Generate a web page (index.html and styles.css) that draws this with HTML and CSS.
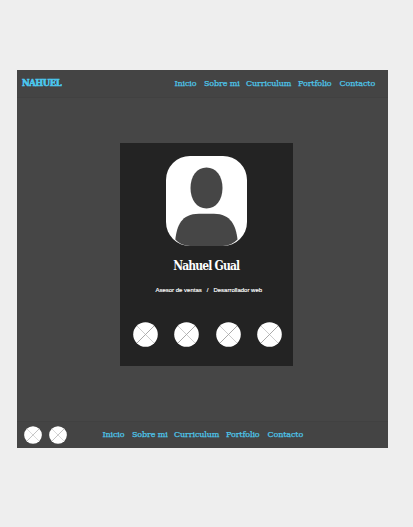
FILE: index.html
```html
<!DOCTYPE html>
<html lang="es">
<head>
<meta charset="utf-8">
<title>Nahuel Gual</title>
<link rel="stylesheet" href="styles.css">
</head>
<body>
<svg class="defs" aria-hidden="true">
  <symbol id="social" viewBox="0 0 25 25">
    <circle cx="12.5" cy="12.5" r="12.3" fill="#fff"/>
    <path d="M4 4 21 21" stroke="#ccc" stroke-width="1"/>
    <path d="M4 21 21 4" stroke="#aaa" stroke-width="1"/>
  </symbol>
</svg>
<div class="page">
  <header class="header">
    <span class="logo">NAHUEL</span>
    <nav class="nav"><a>Inicio</a><a>Sobre mi</a><a>Curriculum</a><a>Portfolio</a><a>Contacto</a></nav>
  </header>
  <main class="main">
    <section class="card">
      <svg class="photo" viewBox="0 0 81 90">
        <rect width="81" height="90" rx="24" fill="#fff"/>
        <path d="M40.500 11.500C50 11.500 56.500 20 56.500 32S50 52.500 40.500 52.500 24.500 44 24.500 32 31 11.500 40.500 11.500Z" fill="#464646"/>
        <path d="M9.300 83.500C11 70 15 57.700 33 57.700H48C65 57.700 70 70 71.500 83.500Q65 90 57 90H24Q15 90 9.300 83.500Z" fill="#464646"/>
      </svg>
      <h1 class="name">Nahuel Gual</h1>
      <p class="role"><span>Asesor de ventas</span><span>/</span><span>Desarrollador web</span></p>
      <div class="socials">
        <svg><use href="#social"/></svg><svg><use href="#social"/></svg><svg><use href="#social"/></svg><svg><use href="#social"/></svg>
      </div>
    </section>
  </main>
  <footer class="footer">
    <div class="links"><svg><use href="#social"/></svg><svg><use href="#social"/></svg></div>
    <nav class="nav"><a>Inicio</a><a>Sobre mi</a><a>Curriculum</a><a>Portfolio</a><a>Contacto</a></nav>
  </footer>
</div>
</body>
</html>
```
FILE: styles.css
```css
* { box-sizing: border-box; }
body { display: flow-root; margin: 0; height: 527px; overflow: hidden; background: #eee; }
.defs { display: none; }
.page {
  width: 370.500px; height: 378px; margin: 70px 0 0 17px;
  display: flow-root; background: #464646; color: #fff;
}
.header {
  height: 28px; padding: 0 0 0 5px;
  display: flex; align-items: center;
  background: #444; border-bottom: 1px solid #414141;
}
.logo {
  width: 152.500px; padding-bottom: 2px; color: #4bc8ef; white-space: nowrap;
  font: bold 8.400px/12px "DejaVu Serif", serif;
  -webkit-text-stroke: 0.6px #4bc8ef;
  letter-spacing: -0.4px;
}
.nav {
  display: grid; grid-template-columns: 29.500px 42px 52px 41.500px 37px;
  color: #4ec6ea; white-space: nowrap;
  font: 8px/12px "DejaVu Serif", serif;
  letter-spacing: -0.12px;
  -webkit-text-stroke: 0.25px #4ec6ea;
}
.main { height: 323px; padding: 45px 0 0 103px; }
.card {
  width: 172.500px; height: 223px; padding-top: 13px;
  display: flex; flex-direction: column; align-items: center;
  background: #232323;
}
.photo { width: 81px; height: 90px; display: block; }
.name {
  margin: 11px 0 0; white-space: nowrap;
  font: bold 12px/18px "DejaVu Serif Condensed", "DejaVu Serif", serif;
  letter-spacing: -0.85px;
}
.role {
  margin: 11px 0 0 5px; display: flex; gap: 5px; white-space: nowrap;
  font: 6px/8px "Liberation Sans", sans-serif;
  -webkit-text-stroke: 0.15px #fff;
}
.socials { display: flex; gap: 16.600px; margin: 27.500px 0 0 2.500px; }
.socials svg { width: 25px; height: 25px; display: block; }
.footer {
  height: 27px; padding-left: 6.500px;
  display: flex; align-items: center;
  background: #444; border-top: 1px solid #414141;
}
.links { width: 79px; display: flex; gap: 7px; }
.links svg { width: 18px; height: 18px; display: block; }
```
